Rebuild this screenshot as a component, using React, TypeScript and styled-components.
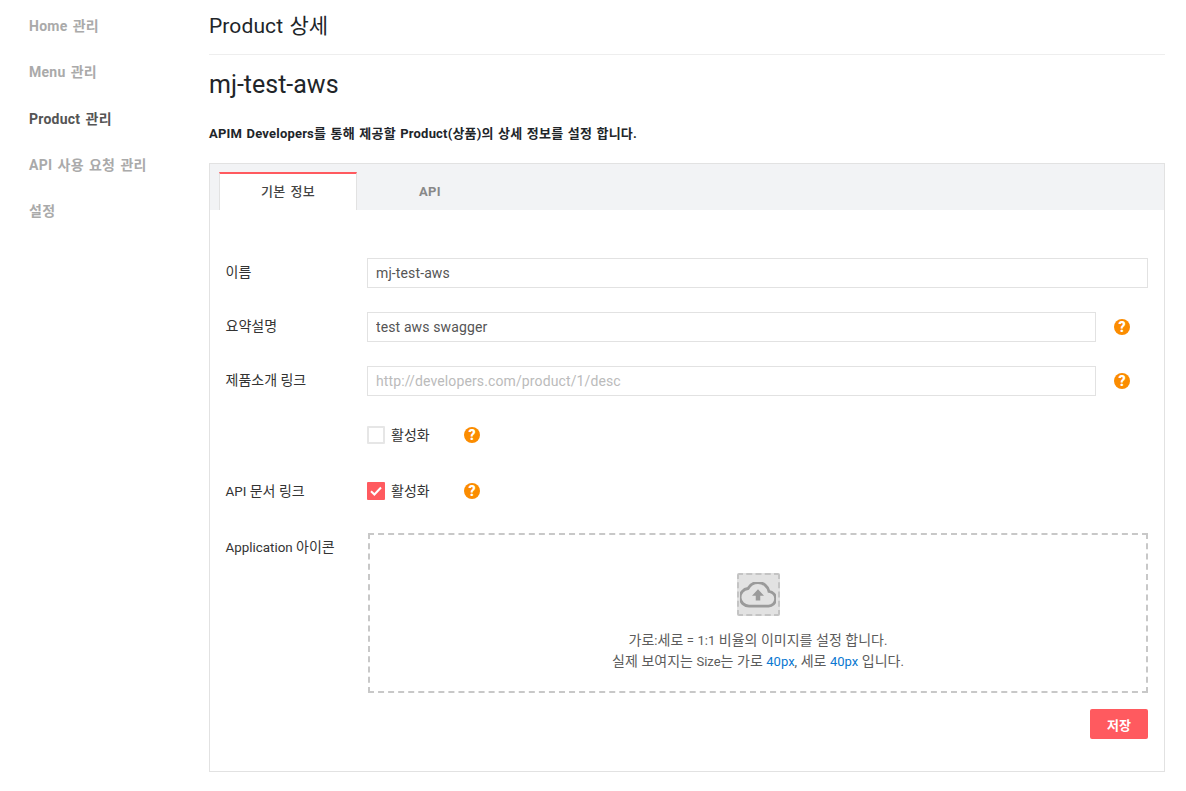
import React from "react";
import styled, { createGlobalStyle } from "styled-components";

const Global = createGlobalStyle`
  html, body { margin: 0; padding: 0; background: #fff; }
  body { font-family: Roboto, "Noto Sans CJK KR", sans-serif; color: #212529; }
  * { box-sizing: border-box; }
`;

const Page = styled.div`
  display: flex;
  width: 1186px;
  height: 791px;
  overflow: hidden;
`;

const Sidebar = styled.nav`
  width: 209px;
  flex: none;
  padding: 16px 0 0 29px;
  display: flex;
  flex-direction: column;
  gap: 26.3px;
`;

const NavItem = styled.div<{ $active?: boolean }>`
  height: 20px;
  line-height: 20px;
  font-size: 14px;
  font-weight: 700;
  letter-spacing: 0.25px;
  word-spacing: 1.5px;
  color: ${(p) => (p.$active ? "#555555" : "#aaaaaa")};
`;

const Main = styled.main`
  width: 956px;
  flex: none;
  display: flex;
  flex-direction: column;
`;

const PageTitle = styled.h1`
  margin: 0;
  height: 55px;
  padding-top: 12px;
  font-size: 21px;
  line-height: 28px;
  font-weight: 400;
  letter-spacing: 0.1px;
  word-spacing: 1px;
  color: #212529;
  border-bottom: 1px solid #eeeeee;
`;

const ProductName = styled.h2`
  margin: 14px 0 0;
  font-size: 25px;
  line-height: 32px;
  font-weight: 400;
  color: #212529;
`;

const Description = styled.p`
  margin: 23px 0 0;
  height: 20px;
  font-size: 13px;
  line-height: 20px;
  font-weight: 700;
  letter-spacing: 0.2px;
  word-spacing: 1px;
  color: #212529;
`;

const Panel = styled.section`
  margin-top: 19px;
  height: 609px;
  border: 1px solid #e2e2e2;
  display: flex;
  flex-direction: column;
`;

const TabBar = styled.div`
  height: 46px;
  flex: none;
  background: #f2f3f5;
  padding: 8px 0 0 9px;
  display: flex;
`;

const Tab = styled.div<{ $active?: boolean }>`
  width: 138px;
  height: 38px;
  text-align: center;
  font-size: 13px;
  font-weight: ${(p) => (p.$active ? 500 : 700)};
  line-height: 35px;
  letter-spacing: 0.3px;
  word-spacing: 1.5px;
  color: ${(p) => (p.$active ? "#444444" : "#888888")};
  background: ${(p) => (p.$active ? "#ffffff" : "transparent")};
  border-top: 2px solid ${(p) => (p.$active ? "#ff5a5f" : "transparent")};
  border-left: 1px solid ${(p) => (p.$active ? "#e2e2e2" : "transparent")};
  border-right: 1px solid ${(p) => (p.$active ? "#e2e2e2" : "transparent")};
  & + & { margin-left: 4px; }
`;

const Form = styled.div`
  padding: 48px 16px 0 16px;
  display: flex;
  flex-direction: column;
`;

const Row = styled.div<{ $mt?: number; $align?: string }>`
  display: flex;
  align-items: ${(p) => p.$align ?? "center"};
  margin-top: ${(p) => p.$mt ?? 0}px;
`;

const Label = styled.label<{ $top?: number }>`
  width: 141px;
  flex: none;
  font-size: 13.4px;
  line-height: 20px;
  color: #333333;
  position: relative;
  top: -1px;
  margin-left: -0.5px;
  margin-right: 0.5px;
  margin-top: ${(p) => p.$top ?? 0}px;
`;

const Ko = styled.span`
  font-size: 14px;
`;

const Input = styled.input`
  flex: 1;
  min-width: 0;
  height: 30px;
  border: 1px solid #e2e2e2;
  padding: 0 8px;
  font-family: inherit;
  font-size: 14px;
  letter-spacing: 0.12px;
  color: #555555;
  outline: none;
  background: #fff;
  &::placeholder { color: #bbbbbb; opacity: 1; }
`;

const HelpSlot = styled.div`
  width: 52px;
  flex: none;
  display: flex;
  justify-content: center;
`;

const HelpIcon = styled.span<{ $ml?: number }>`
  width: 16px;
  height: 16px;
  flex: none;
  border-radius: 50%;
  background: #fb8c00;
  color: #fff;
  font-size: 14px;
  font-weight: 900;
  line-height: 16px;
  text-align: center;
  margin-left: ${(p) => p.$ml ?? 0}px;
`;

const Check = styled.span<{ $checked?: boolean }>`
  width: 18px;
  height: 18px;
  flex: none;
  border-radius: 1px;
  border: 2px solid ${(p) => (p.$checked ? "#ff5a5f" : "#e6e6e6")};
  background: ${(p) => (p.$checked ? "#ff5a5f" : "#fff")};
  display: flex;
  align-items: center;
  justify-content: center;
  margin-left: -0.5px;
`;

const CheckText = styled.span`
  margin-left: 6.5px;
  width: 42px;
  font-size: 14px;
  line-height: 18px;
  white-space: nowrap;
  color: #333333;
`;

const Dropzone = styled.div`
  margin-left: 1px;
  flex: 1;
  height: 160px;
  border: 2px dashed #c8c8c8;
  display: flex;
  flex-direction: column;
  align-items: center;
  padding-top: 38px;
`;

const UploadBox = styled.div`
  width: 43px;
  height: 43px;
  background: #e2e2e2;
  border: 2px dashed #c4c4c4;
  border-radius: 2px;
  display: flex;
  align-items: center;
  justify-content: center;
`;

const Hint = styled.div`
  margin-top: 14px;
  font-size: 13px;
  line-height: 20px;
  word-spacing: 0.3px;
  color: #5c5c5c;
  text-align: center;
`;

const Blue = styled.span`
  color: #0a78d1;
`;

const Actions = styled.div`
  display: flex;
  justify-content: flex-end;
  margin-top: 16px;
`;

const SaveButton = styled.button`
  width: 58px;
  height: 30px;
  border: none;
  border-radius: 2px;
  background: #ff5a5f;
  color: #fff;
  font-family: inherit;
  font-size: 13px;
  font-weight: 700;
  padding: 0;
`;

export default function App() {
  return (
    <Page>
      <Global />
      <Sidebar>
        <NavItem>Home 관리</NavItem>
        <NavItem>Menu 관리</NavItem>
        <NavItem $active>Product 관리</NavItem>
        <NavItem>API 사용 요청 관리</NavItem>
        <NavItem>설정</NavItem>
      </Sidebar>
      <Main>
        <PageTitle>Product 상세</PageTitle>
        <ProductName>mj-test-aws</ProductName>
        <Description>APIM Developers를 통해 제공할 Product(상품)의 상세 정보를 설정 합니다.</Description>
        <Panel>
          <TabBar>
            <Tab $active>기본 정보</Tab>
            <Tab>API</Tab>
          </TabBar>
          <Form>
            <Row>
              <Label><Ko>이름</Ko></Label>
              <Input readOnly value="mj-test-aws" />
            </Row>
            <Row $mt={24}>
              <Label><Ko>요약설명</Ko></Label>
              <Input readOnly value="test aws swagger" />
              <HelpSlot><HelpIcon>?</HelpIcon></HelpSlot>
            </Row>
            <Row $mt={24}>
              <Label><Ko>제품소개 링크</Ko></Label>
              <Input readOnly placeholder="http://developers.com/product/1/desc" />
              <HelpSlot><HelpIcon>?</HelpIcon></HelpSlot>
            </Row>
            <Row $mt={30}>
              <Label />
              <Check />
              <CheckText>활성화</CheckText>
              <HelpIcon $ml={31}>?</HelpIcon>
            </Row>
            <Row $mt={34}>
              <Label $top={4}>API <Ko>문서 링크</Ko></Label>
              <Check $checked>
                <svg width="12" height="10" viewBox="0 0 12 10" fill="none">
                  <path d="M1 5.2 4.4 8.5 11 1.5" stroke="#fff" strokeWidth="2" />
                </svg>
              </Check>
              <CheckText>활성화</CheckText>
              <HelpIcon $ml={31}>?</HelpIcon>
            </Row>
            <Row $mt={30} $align="flex-start">
              <Label $top={5}>Application <Ko>아이콘</Ko></Label>
              <Dropzone>
                <UploadBox>
                  <svg width="36" height="26" viewBox="0 0 24 17">
                    <path
                      d="M19.35 6.04A7.49 7.49 0 0 0 12 0a7.5 7.5 0 0 0-6.65 4.04A6 6 0 0 0 6 16h13a5 5 0 0 0 .35-9.96Z"
                      transform="translate(0 .2) scale(1 .98)"
                      fill="none"
                      stroke="#9a9a9a"
                      strokeWidth="1.9"
                    />
                    <path d="M12 4.6 16 9h-2.5v3.2h-3V9H8Z" fill="#9a9a9a" />
                  </svg>
                </UploadBox>
                <Hint>
                  <Ko>가로</Ko>:<Ko>세로</Ko> = 1:1 <Ko>비율의</Ko> <Ko>이미지를</Ko> <Ko>설정</Ko> <Ko>합니다</Ko>.
                  <br />
                  <Ko>실제</Ko> <Ko>보여지는</Ko> Size<Ko>는</Ko> <Ko>가로</Ko> <Blue>40px</Blue>, <Ko>세로</Ko> <Blue>40px</Blue> <Ko>입니다</Ko>.
                </Hint>
              </Dropzone>
            </Row>
            <Actions>
              <SaveButton>저장</SaveButton>
            </Actions>
          </Form>
        </Panel>
      </Main>
    </Page>
  );
}
